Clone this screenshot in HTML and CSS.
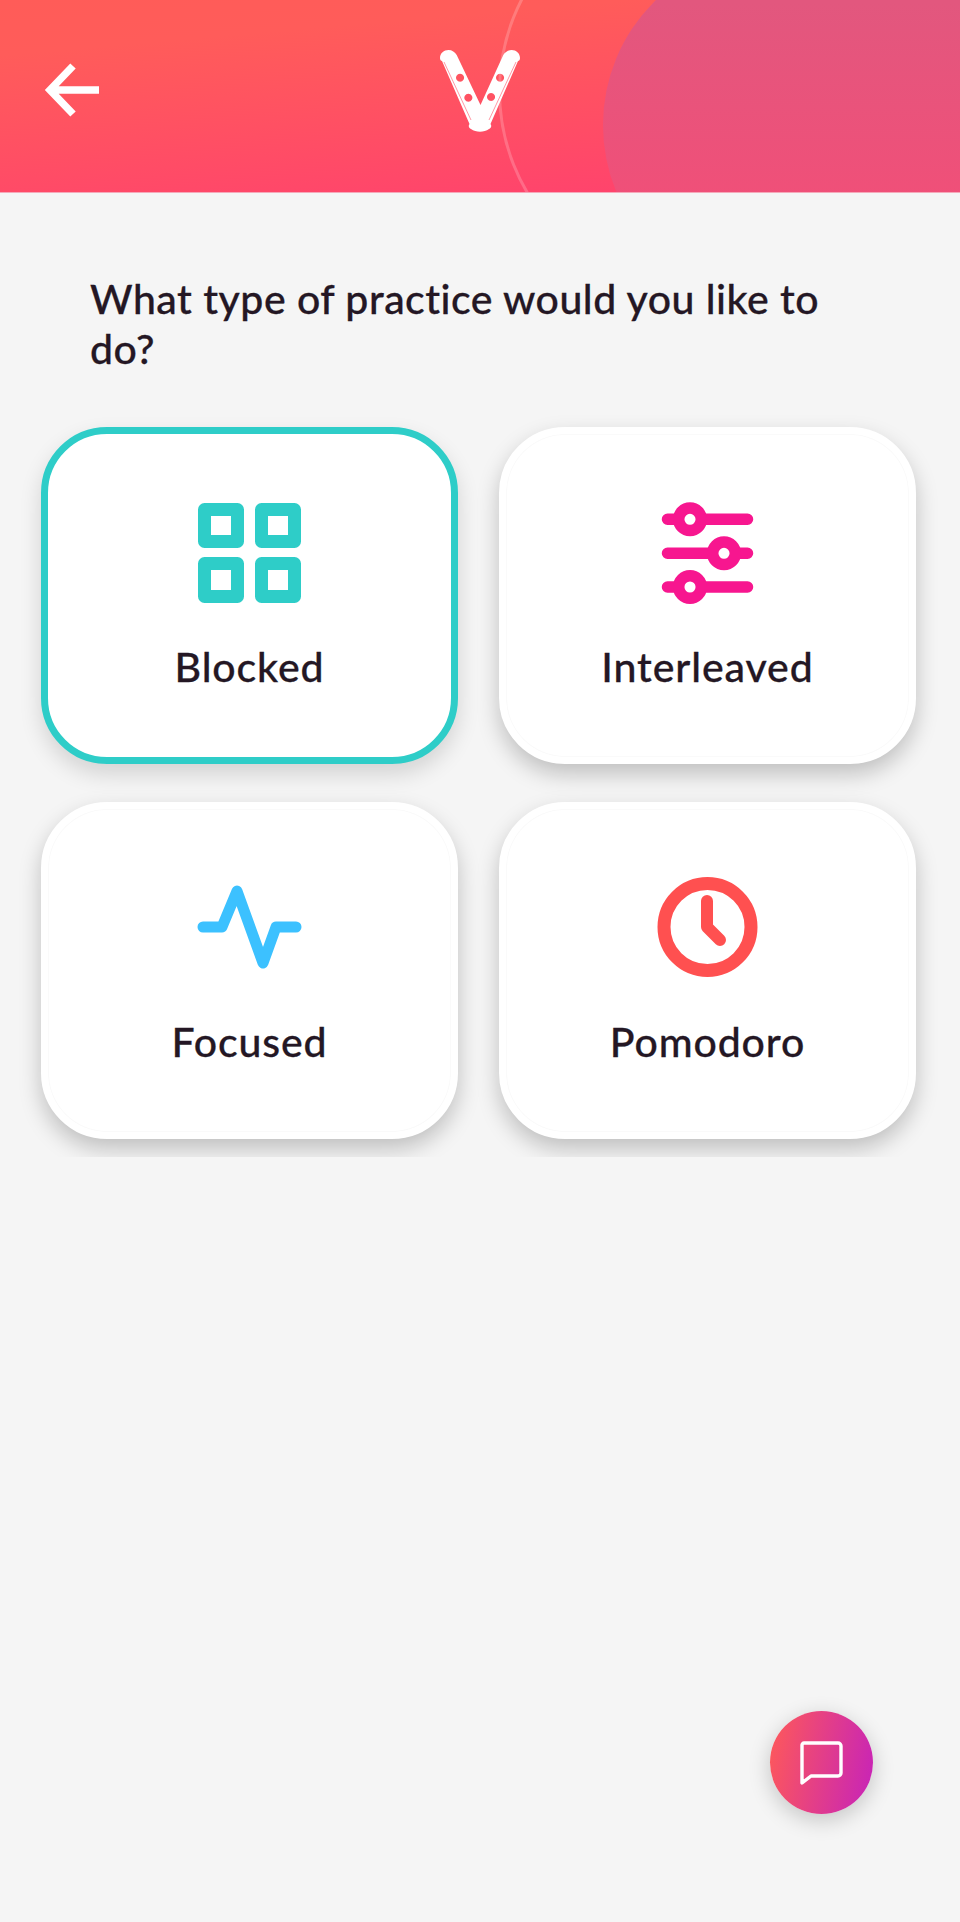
FILE: index.html
```html
<!DOCTYPE html>
<html lang="en">
<head>
    <meta charset="UTF-8">
    <meta name="viewport" content="width=device-width, initial-scale=1.0">
    <title>Practice type</title>
    <link rel="stylesheet" href="styles.css">
</head>
<body>
    <div class="screen">
        <header class="top-bar">
            <span class="top-ring"></span>
            <span class="top-blob"></span>
            <button class="back-button" aria-label="Back">
                <svg width="56" height="58" viewBox="0 0 56 58" fill="none" stroke="#fff" stroke-width="7.5">
                    <path d="M56 29H9M30 5L7 29l23 24"/>
                </svg>
            </button>
            <svg class="logo" width="80" height="82" viewBox="0 0 80 82">
                <!-- body of the V, holes cut with evenodd -->
                <path fill="#fff" fill-rule="evenodd" d="M0 8C0 3 4 0 8.500 0C12 0 15 2 16.700 5L40.500 55L63.300 5C65 2 68 0 71.700 0C76 0 80 3 80 8C80 10 79 11 78 11L50.500 74C52 76 51 78 49 79C44 82.500 36 82.500 31 79C29 78 28 76 29.500 74L2 11C1 11 0 10 0 8zM20 23.700a4 4 0 1 0 .1 0zM28.300 43.700a4 4 0 1 0 .1 0zM60 23.700a4 4 0 1 0 .1 0zM51 43a4 4 0 1 0 .1 0z"/>
                <path fill="none" stroke="#ff5266" stroke-width="0.6" d="M4 12l27 58M76 12L49 70"/>
            </svg>
        </header>

        <h1 class="question">What type of practice would you like to do?</h1>

        <div class="type-list">
            <div class="type-grid">
                <div class="type-card selected">
                    <svg class="type-icon" viewBox="0 0 125 125" fill="none" stroke="#2ecdc8" stroke-width="13" stroke-linejoin="round">
                        <rect x="17.500" y="18.500" width="33" height="32"/>
                        <rect x="74.500" y="18.500" width="33" height="32"/>
                        <rect x="17.500" y="72.500" width="33" height="33"/>
                        <rect x="74.500" y="72.500" width="33" height="33"/>
                    </svg>
                    <span class="type-label">Blocked</span>
                </div>
                <div class="type-card">
                    <svg class="type-icon" viewBox="0 0 125 125" fill="none" stroke="#f7168f" stroke-width="11.500" stroke-linecap="round">
                        <path d="M22.500 28.300h80M22.500 62.300h80M22.500 96h80"/>
                        <circle cx="45" cy="28.300" r="11.300" fill="#fff"/>
                        <circle cx="79" cy="62.300" r="11.300" fill="#fff"/>
                        <circle cx="45" cy="96" r="11.300" fill="#fff"/>
                    </svg>
                    <span class="type-label">Interleaved</span>
                </div>
                <div class="type-card">
                    <svg class="type-icon" viewBox="0 0 125 125" fill="none" stroke="#3cc1ff" stroke-width="11" stroke-linecap="round" stroke-linejoin="round">
                        <path d="M16 61h19l15-36 26 72 13-36h20"/>
                    </svg>
                    <span class="type-label">Focused</span>
                </div>
                <div class="type-card">
                    <svg class="type-icon" viewBox="0 0 125 125" fill="none" stroke="#ff5050" stroke-linecap="round" stroke-linejoin="round">
                        <circle cx="62.500" cy="61" r="43.500" stroke-width="13"/>
                        <path d="M62 35v26l13 13" stroke-width="12"/>
                    </svg>
                    <span class="type-label">Pomodoro</span>
                </div>
            </div>
        </div>

        <button class="chat-button" aria-label="Chat">
            <svg width="44" height="44" viewBox="0 0 44 44" fill="none" stroke="#fff" stroke-width="3.400">
                <path d="M4 2h34a3 3 0 0 1 3 3v27a3 3 0 0 1-3 3H11l-9 7V4a2 2 0 0 1 2-2z" stroke-linejoin="round"/>
            </svg>
        </button>
    </div>
</body>
</html>
```

FILE: styles.css
```css
body {
    margin: 0;
    background-color: #f5f5f5;
    font-family: "Lato", "Liberation Sans", sans-serif;
    color: #241724;
}
.screen {
    position: relative;
    height: 1922px;
    overflow: hidden;
}
.top-bar {
    position: relative;
    display: flex;
    align-items: center;
    justify-content: center;
    height: 192px;
    overflow: hidden;
    background: linear-gradient(175deg, #ff5c58 0%, #ff5c5a 20%, #ff406f 100%);
    border-bottom: 1px solid #f5a9ba;
}
.top-blob {
    position: absolute;
    left: 603px;
    top: -49px;
    width: 500px;
    height: 348px;
    border-radius: 174px 0 0 174px;
    background: linear-gradient(180deg, #e2577e 15%, #f14f78 75%);
}
.top-ring {
    position: absolute;
    left: 498px;
    top: -110px;
    width: 396px;
    height: 396px;
    border: 3px solid rgba(255, 255, 255, 0.2);
    border-radius: 50%;
}
.back-button {
    position: absolute;
    left: 43px;
    top: 61px;
    padding: 0;
    border: none;
    background: none;
}
.back-button svg {
    display: block;
}
.logo {
    position: relative;
    margin-top: -10px;
}
.question {
    margin: 0;
    padding: 81px 100px 0 90px;
    font-size: 41px;
    font-weight: 500;
    letter-spacing: 0.5px;
    line-height: 50px;
    -webkit-text-stroke: 0.3px #241724;
}
.type-list {
    height: 802px;
    margin-top: -19px;
    overflow: hidden;
}
.type-grid {
    display: grid;
    grid-template-columns: 417px 417px;
    grid-auto-rows: 337px;
    column-gap: 41px;
    row-gap: 38px;
    padding: 72px 44px 0 41px;
}
.type-card {
    box-sizing: border-box;
    display: flex;
    flex-direction: column;
    align-items: center;
    padding-top: 57px;
    background-color: #fff;
    border: 7px solid #fff;
    border-radius: 66px;
    box-shadow: 0 10px 22px rgba(0, 0, 0, 0.22), inset 0 0 0 1px #fafafa;
}
.type-card.selected {
    border-color: #2ecdc8;
    box-shadow: 0 10px 22px rgba(0, 0, 0, 0.14);
}
.type-icon {
    width: 125px;
    height: 125px;
}
.type-label {
    margin-top: 26px;
    font-size: 41px;
    font-weight: 500;
    letter-spacing: 0.9px;
    line-height: 50px;
    -webkit-text-stroke: 0.3px #241724;
}
.chat-button {
    position: absolute;
    left: 770px;
    top: 1711px;
    display: flex;
    align-items: center;
    justify-content: center;
    width: 103px;
    height: 103px;
    padding: 0;
    border: none;
    border-radius: 50%;
    background: linear-gradient(100deg, #ff5a58, #c622ba);
    box-shadow: 0 6px 22px rgba(0, 0, 0, 0.2);
}
```
